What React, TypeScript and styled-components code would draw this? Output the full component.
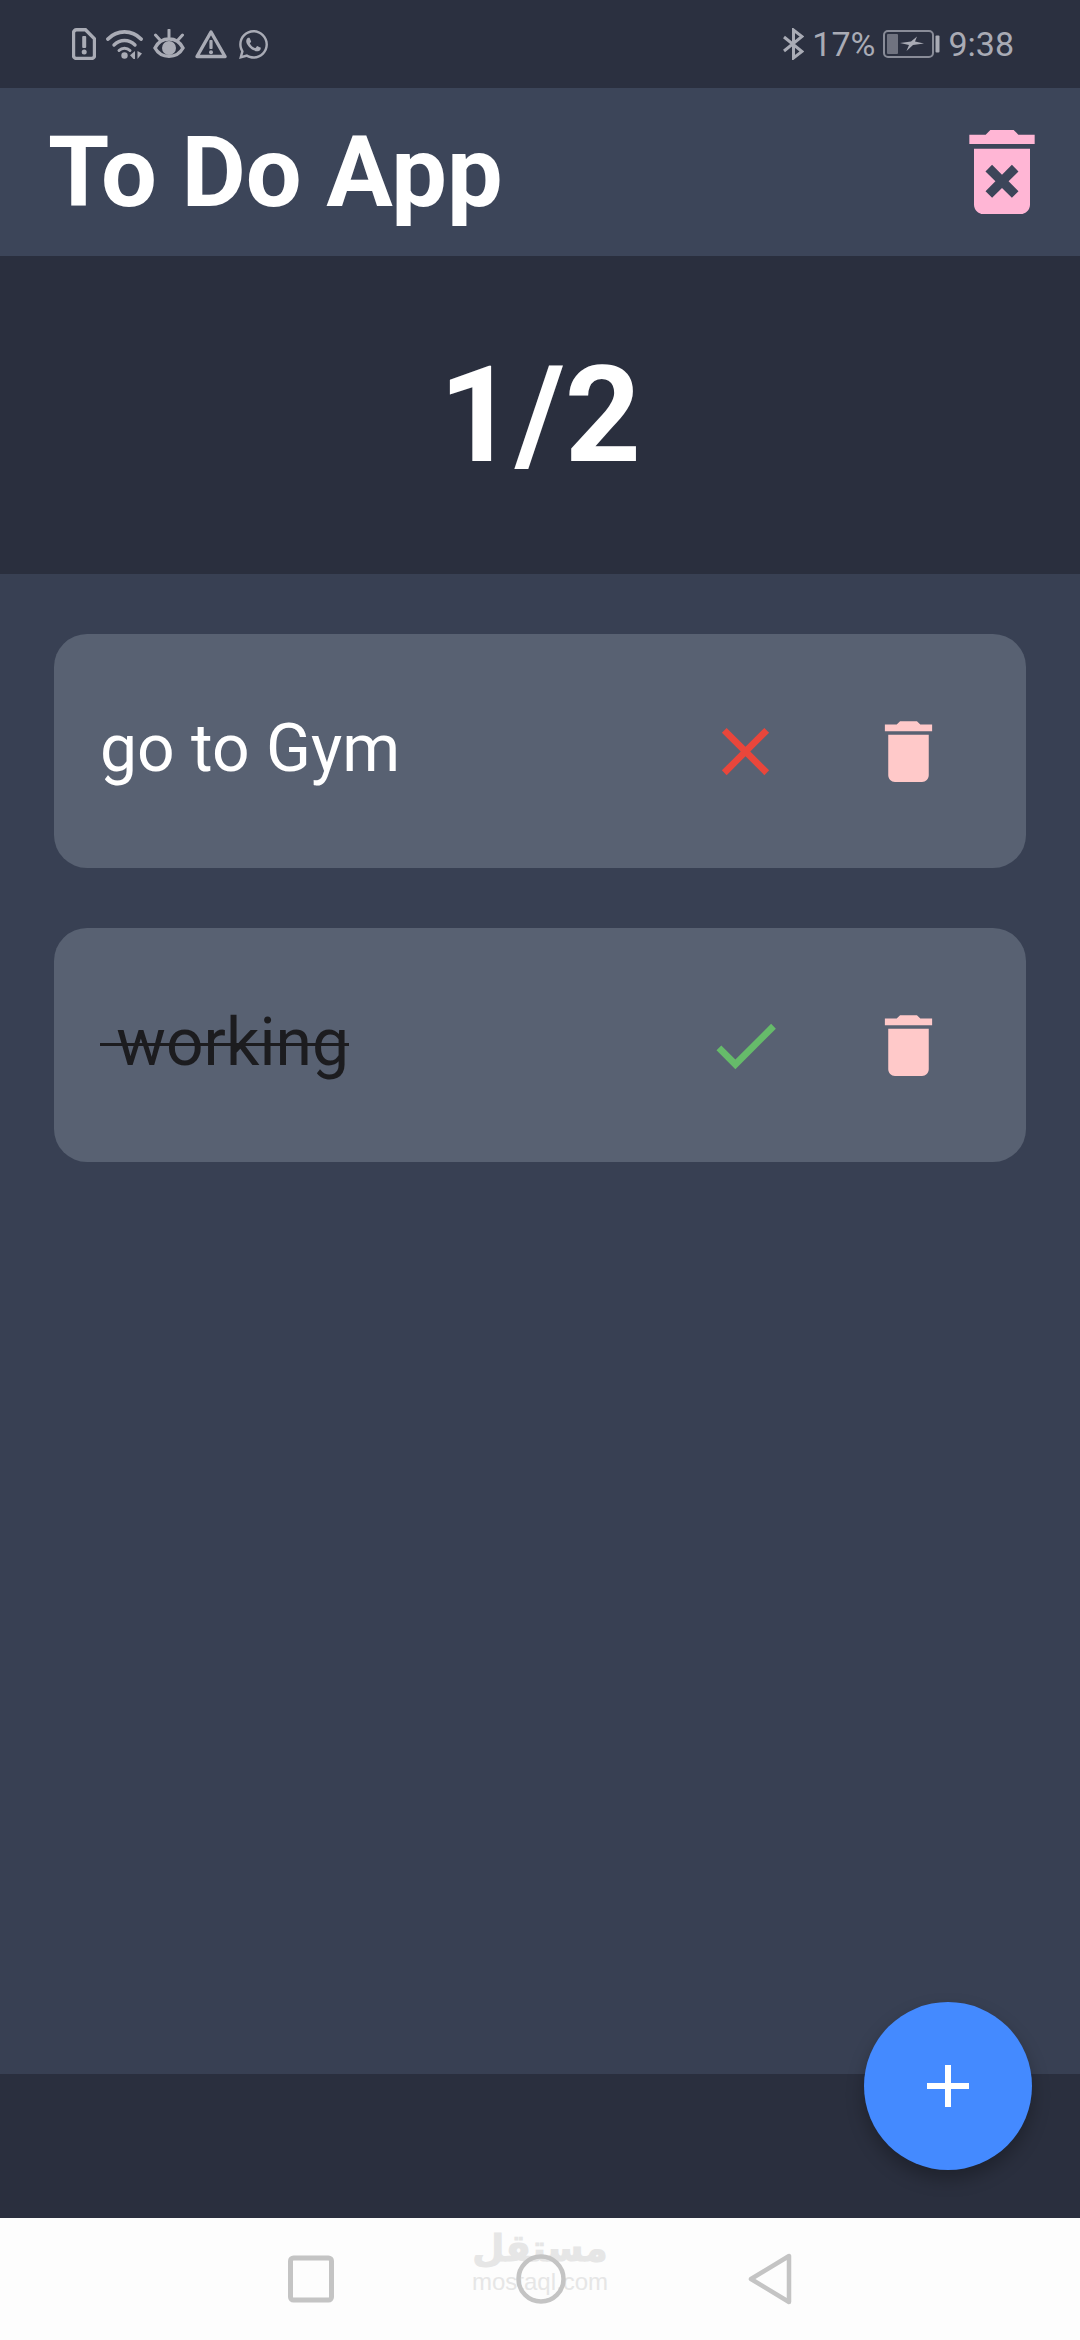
import styled, { createGlobalStyle } from "styled-components";
import { FaWhatsapp } from "react-icons/fa";

const GlobalStyle = createGlobalStyle`
  html, body {
    margin: 0;
    padding: 0;
    background: #2a2f3e;
  }
  * {
    box-sizing: border-box;
  }
`;

// Material icon paths
const DELETE_PATH = "M6 19c0 1.1.9 2 2 2h8c1.1 0 2-.9 2-2V7H6v12zM19 4h-3.5l-1-1h-5l-1 1H5v2h14V4z";
const DELETE_FOREVER_PATH =
  "M6 19c0 1.1.9 2 2 2h8c1.1 0 2-.9 2-2V7H6v12zm2.46-7.12l1.41-1.41L12 12.59l2.12-2.12 1.41 1.41L13.41 14l2.12 2.12-1.41 1.41L12 15.41l-2.12 2.12-1.41-1.41L10.59 14l-2.13-2.12zM15.5 4l-1-1h-5l-1 1H5v2h14V4z";
const CLOSE_PATH =
  "M19 6.41L17.59 5 12 10.59 6.41 5 5 6.41 10.59 12 5 17.59 6.41 19 12 13.41 17.59 19 19 17.59 13.41 12z";
const CHECK_PATH = "M9 16.17L4.83 12l-1.42 1.41L9 19 21 7l-1.41-1.41z";
const ADD_PATH = "M19 13h-6v6h-2v-6H5v-2h6V5h2v6h6v2z";

const STATUS_GREY = "#a9abb5";

const Page = styled.div`
  position: relative;
  width: 1080px;
  height: 2340px;
  display: flex;
  flex-direction: column;
  overflow: hidden;
  font-family: Roboto, "Liberation Sans", sans-serif;
`;

const StatusBar = styled.div`
  flex: 0 0 88px;
  display: flex;
  align-items: center;
  justify-content: space-between;
  padding: 0 66px 0 72px;
  background: #2b3040;
  color: ${STATUS_GREY};
`;

const StatusGroup = styled.div`
  display: flex;
  align-items: center;
  gap: 10px;
`;

const StatusRight = styled(StatusGroup)`
  gap: 8px;
`;

const StatusText = styled.span`
  font-size: 34px;
  line-height: 40px;
`;

const AppBar = styled.header`
  flex: 0 0 168px;
  display: flex;
  align-items: center;
  justify-content: space-between;
  padding: 0 22px 0 48px;
  background: #3c4559;
`;

const Title = styled.h1`
  margin: 0;
  font-size: 99px;
  font-weight: 700;
  line-height: 112px;
  color: #fff;
`;

const ClearButton = styled.button`
  display: flex;
  padding: 0;
  border: 0;
  background: none;
  color: #ffb6d5;
`;

const Counter = styled.div`
  flex: 0 0 318px;
  display: flex;
  align-items: center;
  justify-content: center;
  background: #2a2f3e;
  font-size: 133px;
  font-weight: 700;
  color: #fff;
`;

const Main = styled.main`
  flex: 1;
  display: flex;
  flex-direction: column;
  gap: 60px;
  padding: 60px 54px 0;
  background: #384053;
`;

const TaskCard = styled.div`
  height: 234px;
  display: flex;
  align-items: center;
  padding: 0 77px 0 46px;
  background: #586172;
  border-radius: 33px;
`;

const TaskText = styled.span<{ $done: boolean }>`
  flex: 1;
  margin-top: -4px;
  font-size: 66px;
  line-height: 76px;
  white-space: pre;
  color: ${(p) => (p.$done ? "#1c1c1f" : "#fff")};
  text-decoration: ${(p) => (p.$done ? "line-through" : "none")};
  text-decoration-thickness: 3px;
`;

const IconButton = styled.button<{ $color: string }>`
  display: flex;
  padding: 0;
  border: 0;
  background: none;
  color: ${(p) => p.$color};

  & + & {
    margin-left: 82px;
  }
`;

const BottomBar = styled.div`
  flex: 0 0 144px;
  background: #2a2f3e;
`;

const Fab = styled.button`
  position: absolute;
  left: 864px;
  top: 2002px;
  width: 168px;
  height: 168px;
  display: flex;
  align-items: center;
  justify-content: center;
  padding: 0;
  border: 0;
  border-radius: 50%;
  background: #448aff;
  color: #fff;
  box-shadow: 0 9px 18px rgba(0, 0, 0, 0.28);
`;

const NavBar = styled.nav`
  position: relative;
  flex: 0 0 122px;
  display: flex;
  align-items: center;
  justify-content: center;
  gap: 182px;
  background: #fdfdfd;
  color: #c4c4c4;
`;

const NavButton = styled.button`
  position: relative;
  z-index: 1;
  display: flex;
  padding: 0;
  border: 0;
  background: none;
  color: inherit;
`;

const Watermark = styled.div`
  position: absolute;
  left: 475px;
  top: 10px;
  width: 130px;
  display: flex;
  flex-direction: column;
  align-items: center;
  color: #e6e6e6;
`;

const WatermarkArabic = styled.span`
  font-family: "DejaVu Sans", sans-serif;
  font-size: 37px;
  font-weight: 700;
  line-height: 42px;
  -webkit-text-stroke: 1px #e6e6e6;
`;

const WatermarkLatin = styled.span`
  font-family: "Liberation Sans", sans-serif;
  font-size: 24px;
  line-height: 24px;
`;

const MaterialIcon = ({ path, size }: { path: string; size: number }) => (
  <svg width={size} height={size} viewBox="0 0 24 24" fill="currentColor">
    <path d={path} />
  </svg>
);

const SimAlert = () => (
  <svg width="24" height="32" viewBox="0 0 24 32" fill="none">
    <path d="M4.5 1.800h9l9 9v16.700a3 3 0 0 1-3 3h-15a3 3 0 0 1-3-3v-22.700a3 3 0 0 1 3-3z" stroke="currentColor" strokeWidth="3.400" />
    <rect x="10.200" y="8" width="4" height="12" rx="1" fill="currentColor" />
    <circle cx="12.200" cy="24" r="2.500" fill="currentColor" />
  </svg>
);

const WifiSignal = () => (
  <svg width="37" height="32" viewBox="0 0 37 32" fill="none" stroke="currentColor" strokeLinecap="round">
    <path d="M2 11C11 1.500 26 1.500 35 11" strokeWidth="3.800" />
    <path d="M8 17c6-6 15-6 21 0" strokeWidth="3.400" />
    <path d="M13 22.500c3-3 8-3 11 0" strokeWidth="3" />
    <circle cx="18.500" cy="27.500" r="3.200" fill="currentColor" stroke="none" />
    <path d="M29 23v8h-1.500l-3.500-3.800z" fill="currentColor" stroke="none" />
    <path d="M31.500 23v8l4.500-5.500z" fill="currentColor" stroke="none" />
  </svg>
);

const EyeComfort = () => (
  <svg width="32" height="30" viewBox="0 0 32 30" fill="none" stroke="currentColor">
    <path d="M2 19c6-12 22-12 28 0-6 11-22 11-28 0z" strokeWidth="3.400" />
    <circle cx="16" cy="19" r="7" fill="currentColor" stroke="none" />
    <path d="M16 1v7M2.500 6l5 5.500M29.500 6l-5 5.500" strokeWidth="3" strokeLinecap="round" />
  </svg>
);

const WarningTriangle = () => (
  <svg width="32" height="30" viewBox="0 0 32 30" fill="none">
    <path d="M16 3L30 27.500H2z" stroke="currentColor" strokeWidth="3.400" strokeLinejoin="round" />
    <rect x="14.400" y="11" width="3.200" height="9" rx="0.800" fill="currentColor" />
    <circle cx="16" cy="23.200" r="2" fill="currentColor" />
  </svg>
);

const Bluetooth = () => (
  <svg width="21" height="32" viewBox="0 0 21 32" fill="none" stroke="currentColor" strokeWidth="3">
    <path d="M1 9l18 14.500L10.500 30V2L19 8.500 1 23" />
  </svg>
);

const Battery = () => (
  <svg width="57" height="28" viewBox="0 0 57 28" fill="none">
    <rect x="1" y="1" width="49" height="26" rx="4" stroke="currentColor" strokeWidth="2" opacity="0.75" />
    <rect x="4" y="4" width="11" height="20" rx="1" fill="currentColor" opacity="0.55" />
    <path d="M17 13l11-1.500 6-5-2 5 9 2-11 1.500-6.500 6 2.500-6z" fill="currentColor" />
    <rect x="52.500" y="5.500" width="4" height="17" rx="1" fill="currentColor" />
  </svg>
);

const NavSquare = () => (
  <svg width="46" height="48" viewBox="0 0 46 48" fill="none">
    <rect x="2.500" y="3" width="41" height="42" rx="3" stroke="currentColor" strokeWidth="5" />
  </svg>
);

const NavCircle = () => (
  <svg width="50" height="50" viewBox="0 0 50 50" fill="none">
    <circle cx="25" cy="25" r="22.500" stroke="currentColor" strokeWidth="4.500" />
  </svg>
);

const NavBack = () => (
  <svg width="44" height="52" viewBox="0 0 44 52" fill="none">
    <path d="M41 3v46L3 26z" stroke="currentColor" strokeWidth="4.500" strokeLinejoin="round" />
  </svg>
);

const tasks = [
  { id: 1, title: "go to Gym", done: false },
  { id: 2, title: " working", done: true },
];

export default function App() {
  return (
    <>
      <GlobalStyle />
      <Page>
        <StatusBar>
          <StatusGroup>
            <SimAlert />
            <WifiSignal />
            <EyeComfort />
            <WarningTriangle />
            <FaWhatsapp size={33} />
          </StatusGroup>
          <StatusRight>
            <Bluetooth />
            <StatusText>17%</StatusText>
            <Battery />
            <StatusText>9:38</StatusText>
          </StatusRight>
        </StatusBar>

        <AppBar>
          <Title>To Do App</Title>
          <ClearButton aria-label="Delete all">
            <MaterialIcon path={DELETE_FOREVER_PATH} size={112} />
          </ClearButton>
        </AppBar>

        <Counter>1/2</Counter>

        <Main>
          {tasks.map((task) => (
            <TaskCard key={task.id}>
              <TaskText $done={task.done}>{task.title}</TaskText>
              <IconButton $color={task.done ? "#66bb6a" : "#e9463b"} aria-label="Toggle">
                <MaterialIcon path={task.done ? CHECK_PATH : CLOSE_PATH} size={81} />
              </IconButton>
              <IconButton $color="#ffc9c9" aria-label="Delete">
                <MaterialIcon path={DELETE_PATH} size={81} />
              </IconButton>
            </TaskCard>
          ))}
        </Main>

        <BottomBar />

        <NavBar>
          <Watermark>
            <WatermarkArabic>مستقل</WatermarkArabic>
            <WatermarkLatin>mostaql.com</WatermarkLatin>
          </Watermark>
          <NavButton aria-label="Recents">
            <NavSquare />
          </NavButton>
          <NavButton aria-label="Home">
            <NavCircle />
          </NavButton>
          <NavButton aria-label="Back">
            <NavBack />
          </NavButton>
        </NavBar>

        <Fab aria-label="Add task">
          <MaterialIcon path={ADD_PATH} size={72} />
        </Fab>
      </Page>
    </>
  );
}
